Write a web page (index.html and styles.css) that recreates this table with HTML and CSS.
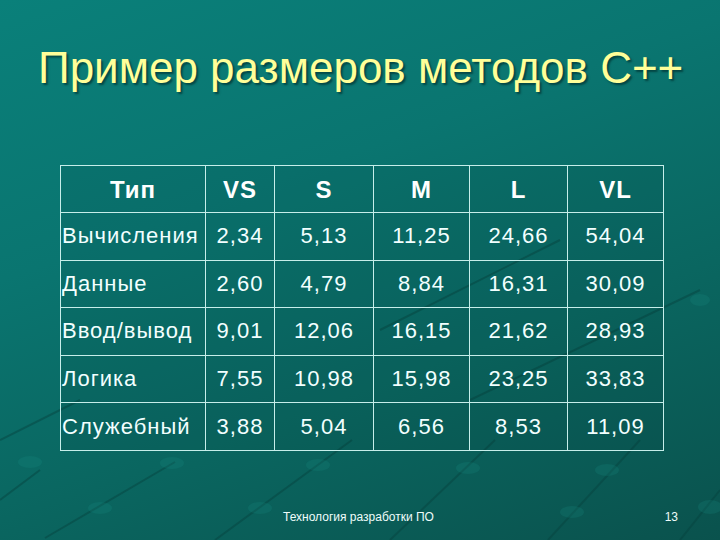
FILE: index.html
```html
<!DOCTYPE html>
<html lang="ru">
<head>
<meta charset="utf-8">
<title>Пример размеров методов С++</title>
<link rel="stylesheet" href="styles.css">
</head>
<body>
<div class="slide">
  <svg class="bg-deco" width="720" height="540" viewBox="0 0 720 540" aria-hidden="true">
    <g class="lines">
      <line x1="45" y1="538" x2="175" y2="462"/>
      <line x1="215" y1="540" x2="352" y2="440"/>
      <line x1="390" y1="540" x2="495" y2="440"/>
      <line x1="548" y1="540" x2="640" y2="440"/>
      <line x1="0" y1="500" x2="40" y2="470"/>
      <line x1="680" y1="540" x2="720" y2="490"/>
      <line x1="0" y1="440" x2="80" y2="400"/>
      <line x1="380" y1="330" x2="560" y2="240"/>
      <line x1="470" y1="400" x2="700" y2="290"/>
    </g>
    <g class="nodes">
      <ellipse cx="30" cy="462" rx="12" ry="6"/>
      <ellipse cx="172" cy="463" rx="12" ry="6"/>
      <ellipse cx="100" cy="508" rx="12" ry="6"/>
      <ellipse cx="318" cy="465" rx="12" ry="6"/>
      <ellipse cx="260" cy="508" rx="12" ry="6"/>
      <ellipse cx="468" cy="468" rx="12" ry="6"/>
      <ellipse cx="607" cy="470" rx="12" ry="6"/>
      <ellipse cx="572" cy="512" rx="12" ry="6"/>
      <ellipse cx="710" cy="507" rx="12" ry="7"/>
      <ellipse cx="700" cy="300" rx="10" ry="6"/>
    </g>
  </svg>

  <h1 class="title">Пример размеров методов С++</h1>

  <table class="data">
    <colgroup>
      <col class="c-type"><col class="c-vs"><col class="c-s"><col class="c-m"><col class="c-l"><col class="c-vl">
    </colgroup>
    <thead>
      <tr><th>Тип</th><th>VS</th><th>S</th><th>M</th><th>L</th><th>VL</th></tr>
    </thead>
    <tbody>
      <tr><td class="name">Вычисления</td><td>2,34</td><td>5,13</td><td>11,25</td><td>24,66</td><td>54,04</td></tr>
      <tr><td class="name">Данные</td><td>2,60</td><td>4,79</td><td>8,84</td><td>16,31</td><td>30,09</td></tr>
      <tr><td class="name">Ввод/вывод</td><td>9,01</td><td>12,06</td><td>16,15</td><td>21,62</td><td>28,93</td></tr>
      <tr><td class="name">Логика</td><td>7,55</td><td>10,98</td><td>15,98</td><td>23,25</td><td>33,83</td></tr>
      <tr><td class="name">Служебный</td><td>3,88</td><td>5,04</td><td>6,56</td><td>8,53</td><td>11,09</td></tr>
    </tbody>
  </table>

  <footer class="footer">
    <span class="footer-text">Технология разработки ПО</span>
    <span class="page-num">13</span>
  </footer>
</div>
</body>
</html>
```

FILE: styles.css
```css
html, body {
  margin: 0;
  padding: 0;
}

body {
  width: 720px;
  height: 540px;
  overflow: hidden;
  font-family: "Liberation Sans", Arial, sans-serif;
}

.slide {
  position: relative;
  width: 720px;
  height: 540px;
  box-sizing: border-box;
  display: flex;
  flex-direction: column;
  background: linear-gradient(160deg, #0a807a 0%, #0a7570 35%, #0a6660 65%, #0a524d 100%);
  overflow: hidden;
}

.bg-deco {
  position: absolute;
  left: 0;
  top: 0;
  z-index: 0;
}

.bg-deco .lines line {
  stroke: #06423e;
  stroke-width: 2;
  opacity: 0.45;
}

.bg-deco .nodes ellipse {
  fill: #1a9288;
  opacity: 0.2;
}

.title {
  position: relative;
  z-index: 1;
  margin: 0;
  padding: 43px 0 0 38px;
  font-weight: normal;
  font-size: 44px;
  line-height: 50px;
  color: #ffff99;
  text-shadow: 2px 2px 2px rgba(0, 50, 48, 0.7);
  white-space: nowrap;
}

.data {
  position: relative;
  z-index: 1;
  margin: 72px 0 0 60px;
  border-collapse: collapse;
  table-layout: fixed;
  width: 603px;
  color: #f2ffff;
  background: rgba(0, 40, 40, 0.08);
}

.c-type { width: 145px; }
.c-vs { width: 69px; }
.c-s { width: 99px; }
.c-m { width: 96px; }
.c-l { width: 98px; }
.c-vl { width: 96px; }

.data th,
.data td {
  border: 1px solid #c6eeea;
  height: 46.6px;
  padding: 0;
  text-align: center;
  vertical-align: middle;
  white-space: nowrap;
}

.data th {
  height: 44px;
  font-size: 24px;
  font-weight: bold;
  letter-spacing: 1px;
  color: #ffffff;
  padding-top: 2px;
}

.data td {
  font-size: 22px;
  letter-spacing: 1px;
}

.data td.name {
  text-align: left;
  padding-left: 1px;
}

.footer {
  position: relative;
  z-index: 1;
  margin-top: auto;
  display: flex;
  align-items: center;
  padding: 0 42px 16px 283px;
  font-size: 12px;
  line-height: 14px;
  color: #eefcfa;
}

.page-num {
  margin-left: auto;
}
```
